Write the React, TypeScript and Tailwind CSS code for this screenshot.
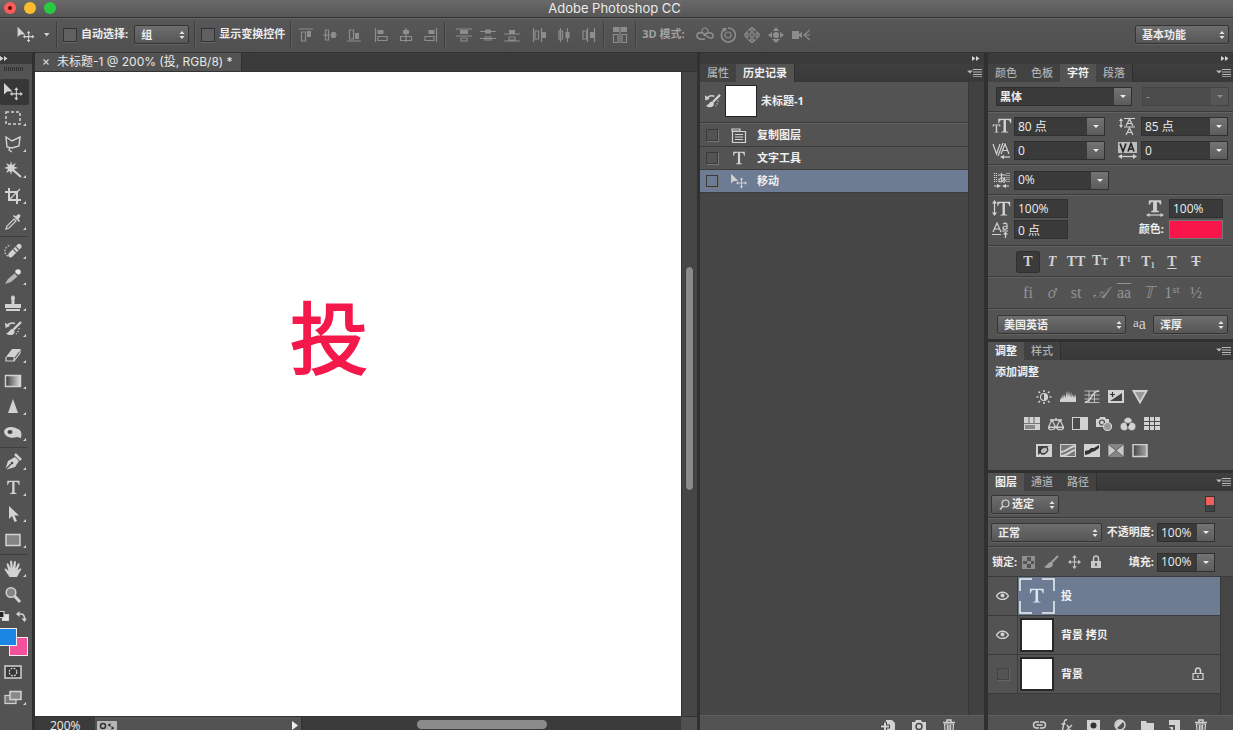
import { ChangeEvent, ReactNode, useState } from "react";

const LIGHT = "#d2d2d2";
const DIM = "#8d8d8d";

/* ---------- shared pieces ---------- */

interface SvgProps {
    w?: number;
    h?: number;
    box?: string;
    color?: string;
    children: ReactNode;
}

function Svg({ w = 18, h = 18, box, color = LIGHT, children }: SvgProps) {
    return (
        <svg
            width={w}
            height={h}
            viewBox={box ?? `0 0 ${w} ${h}`}
            fill="none"
            stroke={color}
            color={color}
            strokeWidth={1.2}
            className="block shrink-0"
            aria-hidden="true"
        >
            {children}
        </svg>
    );
}

function UpDown() {
    return (
        <svg width="6" height="8" viewBox="0 0 6 8" fill="#e4e4e4" className="pointer-events-none absolute top-[6px] right-1">
            <path d="M0.5 3 3 0l2.5 3zM0.5 5 3 8l2.5-3z" />
        </svg>
    );
}

interface PickerProps {
    label: string;
    options: string[];
    className: string;
    inset?: string;
    children?: ReactNode;
}

function Picker({ label, options, className, inset = "pl-[6px]", children }: PickerProps) {
    return (
        <div className={`relative h-[19px] shrink-0 ${className}`}>
            <select
                aria-label={label}
                className={`block h-full w-full appearance-none rounded-[2px] border border-[#353535] bg-linear-to-b from-[#6e6e6e] to-[#565656] pr-3 text-[11px] leading-4 font-bold text-[#ececec] shadow-[0_1px_0_#626262] outline-none ${inset}`}
            >
                {options.map((option) => (
                    <option key={option}>{option}</option>
                ))}
            </select>
            {children}
            <UpDown />
        </div>
    );
}

interface ComboProps {
    label: string;
    value: string;
    className: string;
    disabled?: boolean;
    cjk?: boolean;
}

function Combo({ label, value, className, disabled = false, cjk = false }: ComboProps) {
    return (
        <div className={`flex h-[19px] shrink-0 border ${disabled ? "border-[#444] bg-[#4c4c4c]" : "border-[#303030] bg-[#3a3a3a]"} ${className}`}>
            <input
                aria-label={label}
                defaultValue={value}
                disabled={disabled}
                className={`min-w-0 flex-1 bg-transparent pl-[3px] leading-4 outline-none ${cjk ? "text-[11px] font-bold" : "text-[12px]"} ${disabled ? "text-[#8d8d8d]" : "text-[#eeeeee]"}`}
            />
            <button
                aria-label={`${label} 选项`}
                disabled={disabled}
                className={`flex w-[17px] items-center justify-center ${disabled ? "bg-[#565656]" : "bg-linear-to-b from-[#747474] to-[#5c5c5c]"}`}
            >
                <svg width="6" height="3" viewBox="0 0 6 3" fill={disabled ? "#8d8d8d" : "#eee"}>
                    <path d="M0 0h6L3 3z" />
                </svg>
            </button>
        </div>
    );
}

function Field({ label, value }: { label: string; value: string }) {
    return (
        <input
            aria-label={label}
            defaultValue={value}
            className="h-[19px] w-[54px] shrink-0 border border-[#303030] bg-[#3a3a3a] pl-[3px] text-[12px] leading-4 text-[#eee] outline-none"
        />
    );
}

function PanelTop() {
    return (
        <div className="flex h-[11px] shrink-0 items-center justify-end bg-[#3b3b3b] pr-1">
            <DoubleArrow />
        </div>
    );
}

function DoubleArrow() {
    return (
        <svg width="8" height="5" viewBox="0 0 8 5" fill="#d6d6d6">
            <path d="M0 0l3.5 2.5L0 5zM4 0l3.5 2.5L4 5z" />
        </svg>
    );
}

function PanelTabs({ tabs, initial }: { tabs: string[]; initial: string }) {
    const [active, setActive] = useState(initial);
    return (
        <div className="flex h-[18px] shrink-0 items-center bg-linear-to-b from-[#3f3f3f] to-[#383838]">
            {tabs.map((tab) => (
                <button
                    key={tab}
                    onClick={() => setActive(tab)}
                    className={`-mr-px h-full border-r border-[#303030] px-[7px] text-[11px] leading-[18px] ${
                        active === tab ? "bg-[#535353] font-bold text-[#efefef]" : "bg-[#424242] font-medium text-[#b0b0b0]"
                    }`}
                >
                    {tab}
                </button>
            ))}
            <button aria-label="面板菜单" className="mr-[2px] ml-auto">
                <Svg w={15} h={8} color="#b8b8b8">
                    <path d="M0 1.5h6L3 4.5z" fill="currentColor" stroke="none" />
                    <path d="M6 .5h9M6 3h9M6 5.5h9M6 7.8h9" strokeWidth={1} />
                </Svg>
            </button>
        </div>
    );
}

function Rule() {
    return <div className="h-[2px] shrink-0 border-t border-b border-t-[#3b3b3b] border-b-[#636363]" />;
}

function Divider({ className = "" }: { className?: string }) {
    return <div className={`h-[26px] w-[2px] shrink-0 border-r border-l border-r-[#5e5e5e] border-l-[#3e3e3e] ${className}`} />;
}

const MoveArt = () => (
    <>
        <path d="M0 1v12l3.500-3H9z" fill="currentColor" stroke="none" />
        <path d="M13 7.500v10M8 12.500h10" />
        <path d="M13 5.600l2.200 2.800h-4.400zM13 19.400l2.200-2.800h-4.400zM6.100 12.500l2.800-2.200v4.400zM19.900 12.500l-2.800-2.200v4.400z" fill="currentColor" stroke="none" />
    </>
);

const HistoryBrushArt = () => (
    <>
        <path d="M17 2 9.500 9.500" strokeWidth={2.400} />
        <path d="M9 9c-3-.5-3 3-7 4.500 3 2.500 9 2.500 8.500-2.800z" fill="currentColor" stroke="none" />
        <path d="M3 6c2-3 5-3.500 8-2.500" strokeWidth={1.600} />
        <path d="M1 2.500 1.500 8l4.500-2z" fill="currentColor" stroke="none" />
        <path d="M15 8c0 2-1 4-3 6" strokeDasharray="1.500 1.500" />
    </>
);

const CameraArt = () => (
    <>
        <path d="M1 3h3l1-2h5l1 2h4v10H1z" fill="currentColor" stroke="none" />
        <circle cx="8" cy="7.500" r="3" stroke="#444" strokeWidth="1.500" />
    </>
);

const TrashArt = () => (
    <>
        <path d="M1 3.500h12M5 3V1h4v2" strokeWidth={1.500} />
        <path d="M2.500 5h9l-.6 8H3.100zM5.400 6v7M8.600 6v7" />
        <path d="M7 6v7" />
    </>
);

const LockArt = () => (
    <>
        <path d="M3.500 6V4a2.500 3 0 0 1 5 0v2" strokeWidth={1.500} />
        <path d="M1 6h10v7H1z" fill="currentColor" stroke="none" />
        <path d="M6 8v3" stroke="#444" strokeWidth={1.500} />
    </>
);

const SerifT = () => (
    <path
        d="M1.500 1h15v5h-1c-.4-2.600-1.200-3.600-3.500-3.600h-1.600V14c0 1.600.4 2 2.600 2.100v.9H5v-.9c2.200-.1 2.600-.5 2.600-2.100V2.400H6C3.700 2.400 2.900 3.400 2.500 6h-1z"
        fill="currentColor"
        stroke="none"
    />
);

/* ---------- options bar ---------- */

const alignIcons: ReactNode[][] = [
    [
        <path key="a" d="M1 1h14M3.500 4h4v9h-4z" />,
        <path key="b" d="M1 7h14M3.500 2h3v10h-3zM10 5h3v4h-3z" />,
        <path key="c" d="M1 13h14M3.500 2h4v9h-4z" />,
    ],
    [
        <path key="a" d="M1.500 0v14M4 8.500h9v4H4z" />,
        <path key="b" d="M8 0v14M2.500 8.500h11v4h-11z" />,
        <path key="c" d="M14.500 0v14M3 8.500h9v4H3z" />,
    ],
    [
        <path key="a" d="M0 1h16M0 8h16M5 10h6v3H5z" />,
        <path key="b" d="M0 3.500h16M0 10.500h16M5 9h6v3H5z" />,
        <path key="c" d="M0 6h16M0 13h16M5 9h6v3H5z" />,
    ],
    [
        <path key="a" d="M1.500 0v14M9.500 0v14M3 3h3.500v8H3z" />,
        <path key="b" d="M4.500 0v14M11.500 0v14M3 3h3.500v8H3z" fill="#535353" />,
        <path key="c" d="M7.500 0v14M14.500 0v14M3 3h3.500v8H3z" />,
    ],
];

const alignFills = [
    ["M9 3h4v6H9z", "M9.500 4h4v6h-4z", "M9 5h4v6H9z"],
    ["M3.500 2h6v4h-6z", "M5 2h6v4H5z", "M6.500 2h6v4h-6z"],
    ["M4 2h8v4H4z", "M5 1.500h6v4H5z", "M5 2h6v4H5z"],
    ["M10 4h4v6h-4z", "M9.500 4h4v6h-4z", "M10 4h4v6h-4z"],
];

const modeIcons: { name: string; art: ReactNode }[] = [
    {
        name: "3D 环绕",
        art: (
            <>
                <path d="M9 12C4 13 0 11 1 8s5-3 7-1 4 4 7 4 3-4 0-5-6 1-7 3" strokeWidth={1.600} />
                <circle cx="9" cy="4" r="3" />
            </>
        ),
    },
    {
        name: "3D 滚动",
        art: (
            <>
                <path d="M4 2.500A7 7 0 1 0 8 1" strokeWidth={1.600} />
                <circle cx="8" cy="8" r="3" />
                <path d="M2 1h5L5 5z" fill="currentColor" stroke="none" />
            </>
        ),
    },
    {
        name: "3D 平移",
        art: <path d="M7 9H3v2L.5 8 3 5v2h4V3H5l3-2.500L11 3H9v4h4V5l2.500 3-2.500 3V9H9v4h2l-3 2.500L5 13h2z" />,
    },
    {
        name: "3D 滑动",
        art: (
            <>
                <path d="M8 0l3 4H5zM8 16l4-4H4zM0 8l4-3v6zM16 8l-4-3v6z" fill="currentColor" stroke="none" />
                <circle cx="8" cy="8" r="2.500" fill="currentColor" />
            </>
        ),
    },
    {
        name: "3D 缩放",
        art: (
            <>
                <path d="M0 4h7v8H0zM7 7l3-2v6L7 9z" fill="currentColor" stroke="none" />
                <path d="M18 3l-6 5 6 5M12 8h6" />
            </>
        ),
    },
];

function CheckItem({ children }: { children: string }) {
    return (
        <label className="flex shrink-0 items-center gap-1 text-[11px] font-bold text-[#ececec]">
            <input
                type="checkbox"
                className="h-[14px] w-[14px] appearance-none border border-[#333] bg-[#606060] shadow-[0_1px_0_#666] checked:bg-[#9a9a9a]"
            />
            {children}
        </label>
    );
}

function AlignGroup({ index }: { index: number }) {
    return (
        <div className="flex shrink-0">
            {alignIcons[index].map((art, i) => (
                <button key={i} aria-label={`对齐 ${index * 3 + i + 1}`} className="flex w-6 justify-center">
                    <Svg w={16} h={14} color={DIM}>
                        {art}
                        <path d={alignFills[index][i]} fill="currentColor" stroke="none" />
                    </Svg>
                </button>
            ))}
        </div>
    );
}

function OptionsBar() {
    return (
        <div className="flex h-[35px] shrink-0 items-center border-t border-b border-t-[#666] border-b-[#333] bg-linear-to-b from-[#575757] to-[#505050] pb-[2px]">
            <div className="flex w-14 shrink-0 items-center gap-2 pl-[17px]">
                <Svg w={19} h={17} box="0 0 21 20">
                    <MoveArt />
                </Svg>
                <Svg w={6} h={4}>
                    <path d="M0 0h5.500L2.700 3.500z" fill="currentColor" stroke="none" />
                </Svg>
            </div>
            <Divider className="mr-[5px]" />
            <CheckItem>自动选择:</CheckItem>
            <Picker label="自动选择" options={["组", "图层"]} className="ml-[6px] w-[55px]" />
            <Divider className="mx-[5px]" />
            <CheckItem>显示变换控件</CheckItem>
            <Divider className="mr-[2px] ml-[5px]" />
            <div className="flex shrink-0 gap-1">
                <AlignGroup index={0} />
                <AlignGroup index={1} />
            </div>
            <Divider className="mr-[6px] ml-[2px]" />
            <div className="flex shrink-0 gap-1">
                <AlignGroup index={2} />
                <AlignGroup index={3} />
            </div>
            <Divider className="mr-[3px] ml-[3px]" />
            <button aria-label="自动对齐图层" className="flex w-6 shrink-0 justify-center">
                <Svg w={16} h={16} color={DIM}>
                    <path d="M1 0h6v5H1zM9 0h6v5H9z" fill="currentColor" stroke="none" />
                    <path d="M1.500 7.500h4.500v8H1.500zM10 7.500h4.500v8H10zM8 0v16" />
                </Svg>
            </button>
            <Divider className="mr-[5px] ml-[3px]" />
            <span className="shrink-0 text-[11px] font-bold text-[#a2a2a2]">3D 模式:</span>
            <div className="ml-2 flex shrink-0">
                {modeIcons.map(({ name, art }) => (
                    <button key={name} aria-label={name} className="flex w-6 justify-center">
                        <Svg w={18} h={16} color={DIM}>
                            {art}
                        </Svg>
                    </button>
                ))}
            </div>
            <Picker label="工作区" options={["基本功能", "绘画", "摄影"]} className="mr-1 ml-auto w-[94px]" />
        </div>
    );
}

/* ---------- tool strip ---------- */

const toolGroups: { name: string; art: ReactNode; single?: boolean }[][] = [
    [
        { name: "移动工具", art: <g transform="scale(.95) translate(0 -1)"><MoveArt /></g>, single: true },
        { name: "矩形选框工具", art: <rect x="2" y="3" width="14" height="12" strokeDasharray="3 2" strokeWidth={1.500} /> },
        { name: "多边形套索工具", art: <path d="M2 2l6 4 8-4-1 9-7 2-5-1zM6 12l-1 3 3 2" strokeWidth={1.400} /> },
        {
            name: "魔棒工具",
            art: (
                <>
                    <path d="M8 8l9 8" strokeWidth={2.200} />
                    <path d="M7 0l1 4 4-2-2 3.500 4 1.500-4 1 2 4-4-2-1 4-1-4-4 2 2-4-4-1 4-1.500L2 2l4 2z" fill="currentColor" stroke="none" />
                </>
            ),
        },
        { name: "裁剪工具", art: <><path d="M5 1v12h12M1 5h12v12" strokeWidth={2} /><path d="M16 2 6 12" /></> },
        {
            name: "吸管工具",
            art: (
                <>
                    <path d="M2 16l1-3 7-7 2 2-7 7z" />
                    <path d="M9 3l6 6 1-1-1.500-2C18 3 16 0 13 2l-1 1.500L10 2z" fill="currentColor" stroke="none" />
                </>
            ),
        },
    ],
    [
        {
            name: "污点修复画笔工具",
            art: (
                <>
                    <path d="M5 11 14 2c2-1 5 2 3 4l-9 9c-3 2-5-2-3-4z" fill="currentColor" stroke="none" />
                    <path d="M9 7l4 4M11.500 4.500l4 4" stroke="#666" />
                    <path d="M4 14C-1 12 0 4 7 3" strokeDasharray="1.500 1.500" />
                </>
            ),
        },
        {
            name: "画笔工具",
            art: (
                <>
                    <path d="M1 16 4 11l7-6 3 3-7 6z" fill="#b5b5b5" stroke="none" />
                    <circle cx="14" cy="4" r="2.800" fill="#e4e4e4" stroke="none" />
                    <path d="M11 5l3 3" stroke="#555" />
                </>
            ),
        },
        {
            name: "仿制图章工具",
            art: <path d="M7.500 10V6c-2.500-6 5.500-6 3 0v4H17v4H1v-4zM2 15h14v2H2z" fill="currentColor" stroke="none" />,
        },
        { name: "历史记录画笔工具", art: <HistoryBrushArt /> },
        {
            name: "橡皮擦工具",
            art: (
                <>
                    <path d="M2 11 8 3h9l-6 8z" fill="currentColor" stroke="none" />
                    <path d="M2 11v4h8v-4M10 15l6-8V4" />
                </>
            ),
        },
        {
            name: "渐变工具",
            art: (
                <>
                    <defs>
                        <linearGradient id="toolGradient">
                            <stop offset="0" stopColor="#3a3a3a" />
                            <stop offset="1" stopColor="#e0e0e0" />
                        </linearGradient>
                    </defs>
                    <rect x="1.500" y="3.500" width="15" height="11" fill="url(#toolGradient)" strokeWidth={1.500} />
                </>
            ),
        },
        { name: "锐化工具", art: <path d="M9 1l5 14H4z" fill="currentColor" stroke="none" /> },
        {
            name: "海绵工具",
            art: (
                <>
                    <path d="M0 7c2-5 9-5 14-2 3 1 4 4 3 9l-4-1c-6 2-13 0-13-6z" fill="currentColor" stroke="none" />
                    <ellipse cx="6" cy="8" rx="2.500" ry="2" fill="#444" stroke="none" />
                </>
            ),
        },
    ],
    [
        {
            name: "钢笔工具",
            art: (
                <>
                    <path d="M1 17 4 8l7-4 4 4-4 6z" fill="currentColor" stroke="none" />
                    <path d="M1 17l6-6" stroke="#444" />
                    <circle cx="8" cy="10" r="1.300" fill="#444" stroke="none" />
                    <path d="M11 1l6 6" strokeWidth={2.500} />
                </>
            ),
        },
        { name: "文字工具", art: <g transform="translate(2 1) scale(.82)"><SerifT /></g> },
        { name: "路径选择工具", art: <path d="M5 1v13l3-3 2.500 6 2.500-1-2.500-5.500H15z" fill="currentColor" stroke="none" /> },
        { name: "矩形工具", art: <rect x="2" y="3.500" width="14" height="11" fill="#858585" strokeWidth={1.500} /> },
    ],
    [
        {
            name: "抓手工具",
            art: (
                <path
                    d="M5.500 17C4 14 1 11 .5 9c1-1 2 0 4 2L2.500 4c1-1.500 2-.5 2.300.5L6.500 8 6 1.500C7 0 8 .5 8.200 2l.6 6 1.200-6.500c1-1 2-.5 1.900 1L11.500 8.500l2.500-5c1.500-.8 2 .3 1.500 1.500l-2 5.500 2.500-2c1.500-.3 1.500.6 1 1.500C15 13 14 15 13 17z"
                    fill="currentColor"
                    stroke="none"
                />
            ),
        },
        {
            name: "缩放工具",
            art: (
                <>
                    <circle cx="7" cy="6.500" r="4.800" fill="#858585" strokeWidth={1.500} />
                    <path d="M10.500 10l5.500 6" strokeWidth={3} />
                </>
            ),
            single: true,
        },
    ],
];

function ToolStrip() {
    const [tool, setTool] = useState("移动工具");
    return (
        <nav aria-label="工具" className="flex w-8 shrink-0 flex-col bg-[#535353]">
            <div className="flex h-[11px] shrink-0 items-center bg-[#3b3b3b]">
                <DoubleArrow />
            </div>
            <div className="mt-[3px] mb-[8px] ml-1 h-1 w-5 shrink-0 bg-[repeating-linear-gradient(90deg,#303030_0_1px,#535353_1px_2px)]" />
            {toolGroups.map((group, i) => (
                <div key={i} className="shrink-0">
                    {i > 0 && (
                        <div className="mr-1 py-px">
                            <div className="h-px bg-[#3f3f3f]" />
                        </div>
                    )}
                    {group.map(({ name, art, single }) => (
                        <button
                            key={name}
                            aria-label={name}
                            title={name}
                            onClick={() => setTool(name)}
                            className={`block h-[26px] w-[29px] ${tool === name ? "rounded-[2px] bg-[#373737]" : ""}`}
                        >
                            <Svg w={29} h={26}>
                                <g transform="translate(4 4)">{art}</g>
                                {!single && <path d="M26 18v3h-3z" fill="currentColor" stroke="none" />}
                            </Svg>
                        </button>
                    ))}
                </div>
            ))}
            <div className="flex h-4 shrink-0 items-center justify-between pr-[5px]">
                <Svg w={10} h={10}>
                    <path d="M2.500 3.500h6v6h-6z" fill="#e5e5e5" />
                    <path d="M-2 .5h6v6h-6z" fill="#222" />
                </Svg>
                <Svg w={11} h={11}>
                    <path d="M3 3h2c3 0 3.500 2 3.500 5" strokeWidth={1.500} />
                    <path d="M0 3l3.500-3v6zM5.500 7.500h5.500L8.500 11z" fill="currentColor" stroke="none" />
                </Svg>
            </div>
            <div className="relative mt-1 h-7 shrink-0">
                <button aria-label="背景色" className="absolute top-[9px] left-[9px] h-[19px] w-[19px] border border-[#eee] bg-[#f4509c]" />
                <button aria-label="前景色" className="absolute top-0 -left-px h-[18px] w-[18px] border border-[#eee] bg-[#1c86e4]" />
            </div>
            <button aria-label="快速蒙版" className="mt-2 ml-1 h-4 shrink-0">
                <Svg w={18} h={14}>
                    <rect x="1" y="1" width="16" height="12" fill="#383838" strokeWidth={1.500} />
                    <circle cx="9" cy="7" r="3.800" strokeDasharray="2 1" />
                </Svg>
            </button>
            <button aria-label="屏幕模式" className="mt-[10px] ml-1 h-4 shrink-0">
                <Svg w={22} h={16}>
                    <rect x="1" y="5.500" width="11" height="8" fill="#777" />
                    <rect x="6" y="1.500" width="11" height="8" fill="#888" strokeWidth={1.500} />
                    <path d="M22 12v3h-3z" fill="currentColor" stroke="none" />
                </Svg>
            </button>
        </nav>
    );
}

/* ---------- document ---------- */

function DocumentArea() {
    return (
        <main className="flex min-w-0 flex-1 flex-col border-l-3 border-[#303030] bg-[#3b3b3b]">
            <div className="flex h-[19px] shrink-0 border-b border-[#333]">
                <div className="flex items-center gap-2 border-r border-[#303030] bg-[#535353] pr-2 pl-2 font-['Inter','Noto_Sans_CJK_SC',sans-serif] text-[12px] whitespace-nowrap text-[#e8e8e8]">
                    <button aria-label="关闭文档">
                        <Svg w={6} h={6}>
                            <path d="M.5.5l5 5M5.500.5l-5 5" />
                        </Svg>
                    </button>
                    未标题-1 @ 200% (投, RGB/8) *
                </div>
            </div>
            <div className="flex min-h-0 flex-1">
                <div className="relative min-w-0 flex-1 bg-white">
                    <span className="absolute top-[220px] left-[255px] font-['Noto_Sans_CJK_SC',sans-serif] text-[78px] leading-[84px] text-[#f5184a] [-webkit-text-stroke:2px_#f5184a]">
                        投
                    </span>
                </div>
                <div className="flex w-4 shrink-0 justify-center border-l border-[#333] bg-[#464646] pt-[194px]">
                    <div className="h-[225px] w-[9px] rounded-full border border-[#3a3a3a] bg-[#8b8b8b]" />
                </div>
            </div>
            <div className="flex h-[14px] shrink-0 overflow-hidden border-t border-[#333]">
                <input aria-label="缩放比例" defaultValue="200%" className="h-[17px] w-[60px] bg-transparent pl-[15px] text-[12px] leading-[17px] text-[#eee] outline-none" />
                <div className="flex w-[207px] items-start justify-between border-r border-[#333] bg-[#535353] pt-[3px] pr-[2px]">
                    <Svg w={22} h={12}>
                        <rect x="2" y="1" width="20" height="12" rx="1" fill="#b5b5b5" stroke="none" />
                        <circle cx="8" cy="6" r="2.500" stroke="#333" strokeWidth={1.500} />
                        <path d="M12.500 5l3-2v4zM19.500 8l-3-2v4z" fill="#333" stroke="none" />
                    </Svg>
                    <Svg w={7} h={10} color="#eee">
                        <path d="M0 1l6 4.500L0 10z" fill="currentColor" stroke="none" />
                    </Svg>
                </div>
                <div className="flex-1 pt-[3px] pl-[115px]">
                    <div className="h-[9px] w-[130px] rounded-full bg-[#8b8b8b]" />
                </div>
                <div className="w-4 bg-[#505050]" />
            </div>
        </main>
    );
}

/* ---------- history panel ---------- */

const history = [
    {
        name: "复制图层",
        icon: (
            <Svg w={16} h={15}>
                <path d="M1.500 3.500h13v11h-13zM1 1h8v2H1z" />
                <path d="M4 6.500h8M4 9h8M4 11.500h8" />
            </Svg>
        ),
    },
    {
        name: "文字工具",
        icon: (
            <Svg w={14} h={14} box="0 0 18 18">
                <SerifT />
            </Svg>
        ),
    },
    {
        name: "移动",
        icon: (
            <Svg w={19} h={16} box="0 0 21 20">
                <MoveArt />
            </Svg>
        ),
    },
];

function HistoryPanel() {
    const [current, setCurrent] = useState("移动");
    return (
        <aside className="flex w-[291px] shrink-0 flex-col border-r-4 border-l-3 border-[#303030] bg-[#535353]">
            <PanelTop />
            <PanelTabs tabs={["属性", "历史记录"]} initial="历史记录" />
            <div className="flex min-h-0 flex-1">
                <div className="flex flex-1 flex-col bg-[#464646]">
                    <div className="flex h-10 shrink-0 items-center gap-1 bg-[#535353] pb-[2px] pl-1">
                        <Svg w={17} h={16} box="0 0 18 17">
                            <HistoryBrushArt />
                        </Svg>
                        <div className="h-8 w-8 border border-[#222] bg-white" />
                        <span className="text-[11px] font-bold text-[#efefef]">未标题-1</span>
                    </div>
                    <Rule />
                    {history.map(({ name, icon }) => (
                        <div
                            key={name}
                            className={`flex h-[23px] shrink-0 items-center border-b border-[#3c3c3c] pl-[6px] ${current === name ? "bg-[#6d7b93]" : "bg-[#535353]"}`}
                        >
                            <input
                                type="checkbox"
                                aria-label={`历史画笔源 ${name}`}
                                className="h-3 w-3 appearance-none border border-[#3a3a3a] shadow-[1px_1px_0_#777]"
                            />
                            <button onClick={() => setCurrent(name)} className="flex flex-1 items-center">
                                <span className="flex w-[39px] justify-center pl-[3px]">{icon}</span>
                                <span className="text-[11px] font-bold text-[#efefef]">{name}</span>
                            </button>
                        </div>
                    ))}
                </div>
                <div className="w-4 shrink-0 border-l border-[#383838] bg-[#414141]" />
            </div>
            <div className="flex h-[15px] shrink-0 items-start justify-end gap-[15px] overflow-hidden border-t border-[#606060] pt-[3px] pr-[29px]">
                <button aria-label="从当前状态创建新文档">
                    <Svg w={16} h={14}>
                        <path d="M6 1h6l3 3v9H6z" fill="currentColor" stroke="none" />
                        <path d="M0 7.500h10M5 3v9" stroke="#444" strokeWidth={4} />
                        <path d="M1 7.500h8M5 3.500v8" strokeWidth={2} />
                    </Svg>
                </button>
                <button aria-label="创建新快照">
                    <Svg w={16} h={14}>
                        <CameraArt />
                    </Svg>
                </button>
                <button aria-label="删除当前状态">
                    <Svg w={13} h={14}>
                        <TrashArt />
                    </Svg>
                </button>
            </div>
        </aside>
    );
}

/* ---------- character panel ---------- */

const serif = "font-['Liberation_Serif',serif]";

const styleButtons: { name: string; face: ReactNode; on?: boolean }[] = [
    { name: "仿粗体", face: "T", on: true },
    { name: "仿斜体", face: <i>T</i> },
    { name: "全部大写字母", face: "TT" },
    { name: "小型大写字母", face: <>T<small className="text-[10px]">T</small></> },
    { name: "上标", face: <>T<sup className="text-[8px]">1</sup></> },
    { name: "下标", face: <>T<sub className="text-[8px]">1</sub></> },
    { name: "下划线", face: <u className="underline-offset-2">T</u> },
    { name: "删除线", face: <s>T</s> },
];

const openTypeButtons: { name: string; face: ReactNode }[] = [
    { name: "标准连字", face: "fi" },
    { name: "上下文替代字", face: <i>ơ</i> },
    { name: "自由连字", face: "st" },
    { name: "花饰字", face: <i>𝒜</i> },
    { name: "文体替代字", face: <span className="overline">aa</span> },
    { name: "标题替代字", face: <i>𝕋</i> },
    { name: "序数字", face: <>1<sup className="text-[11px]">st</sup></> },
    { name: "分数字", face: "½" },
];

function CharacterPanel() {
    return (
        <section className="shrink-0">
            <PanelTabs tabs={["颜色", "色板", "字符", "段落"]} initial="字符" />
            <div className="flex h-[29px] items-center gap-[10px] pl-2">
                <Combo label="字体" value="黑体" className="w-[136px]" cjk />
                <Combo label="字体样式" value="-" className="w-[87px]" disabled />
            </div>
            <Rule />
            <div className="grid grid-cols-[26px_91px_36px_87px] gap-y-[5px] pt-1 pb-1">
                <div className="flex items-center pl-1">
                    <Svg w={20} h={17}>
                        <g transform="translate(5 0) scale(.86)"><SerifT /></g>
                        <g transform="translate(0 6) scale(.5)"><SerifT /></g>
                    </Svg>
                </div>
                <Combo label="字体大小" value="80 点" className="w-full" />
                <div className="flex items-center justify-center pl-2">
                    <Svg w={18} h={17}>
                        <path d="M6 .5h11M6 9h11M3 2v6" />
                        <path d="M3 0l2 3H1zM3 10l2-3H1z" fill="currentColor" stroke="none" />
                        <path d="M8 8l3.500-7L15 8M9 5.500h5M8 17l3.500-7L15 17M9 14.500h5" />
                    </Svg>
                </div>
                <Combo label="行距" value="85 点" className="w-full" />
                <div className="flex items-center pl-1">
                    <Svg w={20} h={16}>
                        <path d="M1 1l3.500 10L8 1M6 13l5-13M9 11l4-10 4 10M10.500 7.500h5" />
                        <path d="M10 14h8" />
                        <path d="M8 14l4-2v4z" fill="currentColor" stroke="none" />
                    </Svg>
                </div>
                <Combo label="字距微调" value="0" className="w-full" />
                <div className="flex items-center justify-center pl-2">
                    <Svg w={19} h={17}>
                        <path d="M0 0h19v11H0z" fill="#bdbdbd" stroke="none" />
                        <path d="M2 1.500l3 8 3-8M10 9.500l3-8 3 8M11 7h4" stroke="#222" strokeWidth={1.600} />
                        <path d="M2 14.500h15" />
                        <path d="M0 14.500l4-2.500v5zM19 14.500l-4-2.500v5z" fill="currentColor" stroke="none" />
                    </Svg>
                </div>
                <Combo label="字符间距" value="0" className="w-full" />
            </div>
            <Rule />
            <div className="flex h-[28px] items-center pl-1">
                <Svg w={22} h={17}>
                    <path d="M2.500 1v9M17 1v9M4.500 1v9M15 1v9" strokeDasharray="1 1" />
                    <path d="M6 3h8M9.500 1v9M13 5c-1 3-3 5-5 5-3-1 0-5 3-4s3 4 0 4.500" />
                    <path d="M2 14h4M13 14h4" />
                    <path d="M9 14l-4-2v4zM10 14l4-2v4z" fill="currentColor" stroke="none" />
                </Svg>
                <Combo label="比例间距" value="0%" className="w-[95px]" />
            </div>
            <Rule />
            <div className="flex flex-col gap-[2px] pt-[3px] pr-[10px] pb-[6px]">
                <div className="flex h-[19px] items-center pl-1">
                    <Svg w={22} h={17}>
                        <g transform="translate(4 1) scale(.86)"><SerifT /></g>
                        <path d="M2.500 2v12" />
                        <path d="M2.500 0l2.500 3.500H0zM2.500 16L5 12.500H0z" fill="currentColor" stroke="none" />
                    </Svg>
                    <Field label="垂直缩放" value="100%" />
                    <div className="mr-[5px] ml-auto">
                        <Svg w={18} h={17}>
                            <g transform="translate(2 0) scale(.78 .7)" stroke="currentColor" strokeWidth={1}>
                                <path d="M1.500 1h15v5h-1c-.4-2.600-1.200-3.600-3.500-3.600h-1V14c0 1.600.4 2 2.600 2.100v.9H4.500v-.9c2.200-.1 2.600-.5 2.600-2.100V2.400H6C3.700 2.400 2.900 3.400 2.500 6h-1z" fill="currentColor" />
                            </g>
                            <path d="M2 15h14" />
                            <path d="M0 15l3.500-2v4zM18 15l-3.500-2v4z" fill="currentColor" stroke="none" />
                        </Svg>
                    </div>
                    <Field label="水平缩放" value="100%" />
                </div>
                <div className="flex h-[19px] items-center pl-1">
                    <Svg w={22} h={16}>
                        <path d="M1 10l4-9 4 9M2.500 7h5M0 12.500h9" />
                        <path d="M11 2c2-1.500 4-1 4 1v4M15 4c-5 0-5 3.500-2 3.500l2-1M10 9h6M13.500 11v5" />
                        <path d="M13.500 9.500l2.500 3h-5z" fill="currentColor" stroke="none" />
                    </Svg>
                    <Field label="基线偏移" value="0 点" />
                    <span className="mr-[5px] ml-auto text-[11px] font-bold text-[#ececec]">颜色:</span>
                    <button aria-label="文本颜色" className="h-[19px] w-[54px] border border-[#777] bg-[#f9144a]" />
                </div>
            </div>
            <Rule />
            <div className={`flex h-[29px] items-center pl-7 ${serif} text-[14px] font-bold text-[#d2d2d2]`}>
                {styleButtons.map(({ name, face, on }) => (
                    <button key={name} aria-label={name} className={`h-[22px] w-6 leading-5 whitespace-nowrap ${on ? "rounded-[2px] border border-[#303030] bg-[#3a3a3a]" : ""}`}>
                        {face}
                    </button>
                ))}
            </div>
            <Rule />
            <div className={`flex h-[30px] items-center pl-7 ${serif} text-[16px] text-[#939393]`}>
                {openTypeButtons.map(({ name, face }) => (
                    <button key={name} aria-label={name} className="h-[22px] w-6 leading-5 whitespace-nowrap">
                        {face}
                    </button>
                ))}
            </div>
            <Rule />
            <div className="flex h-[29px] items-center pl-[9px]">
                <Picker label="语言" options={["美国英语", "英国英语"]} className="w-[129px]" />
                <span className={`flex w-[27px] justify-center ${serif} leading-4 text-[#d2d2d2]`}>
                    <span className="pb-1 text-[13px]">a</span>
                    <span className="pt-px text-[16px]">a</span>
                </span>
                <Picker label="消除锯齿" options={["浑厚", "锐利", "平滑"]} className="w-[75px]" />
            </div>
        </section>
    );
}

/* ---------- adjustments ---------- */

const frame = <path d="M.5.5h15v12H.5z" />;

const adjustments: { indent: string; icons: ReactNode[] }[] = [
    {
        indent: "pl-[44px]",
        icons: [
            <>
                <circle cx="8" cy="7" r="3.500" />
                <path d="M8 3.500a3.500 3.500 0 0 1 0 7z" fill="currentColor" stroke="none" />
                <path d="M8 0v2M8 12v2M.5 7h2M13.500 7h2M2.500 1.500l1.500 1.500M12 11l1.500 1.500M13.500 1.500 12 3M4 11l-1.500 1.500" strokeWidth={1.600} />
            </>,
            <path d="M0 12V8l1 2V6l1 3 1-5 1 5V4l1.500 4L7 1l1 6 1-6 1 6 1.500-5v6L13 4v4l1-3v3l1-4 1 4v4z" fill="currentColor" stroke="none" />,
            <>
                <path d="M.5 1h15M.5 5h15M.5 9h15M.5 12.500h15M5 1v12M10.500 1v12" strokeWidth={0.800} />
                <path d="M1 12c7 0 6-11 14-11" strokeWidth={1.500} />
            </>,
            <>
                <path d="M0 0h16v13H0z" fill="currentColor" stroke="none" />
                <path d="M2 11 14 3v8z" fill="#444" stroke="none" />
                <path d="M2 4.500h5M4.500 2v5" stroke="#333" />
            </>,
            <path d="M1.500 1h13L8 12.500z" fill="#999" strokeWidth={1.800} />,
        ],
    },
    {
        indent: "pl-[32px]",
        icons: [
            <>
                <path d="M0 0h16v13H0z" fill="currentColor" stroke="none" />
                <path d="M0 6.500h16M5 0v6M10 0v6" stroke="#777" />
                <path d="M1 8h10v4H1z" fill="#8a8a8a" stroke="none" />
            </>,
            <>
                <path d="M2 3h12M8 1v2" strokeWidth={1.600} />
                <path d="M4 3l-3.500 7h7zM12 3l-3.500 7h7zM0 10.500c1 3 6 3 7.500 0zM8.500 10.500c1 3 6 3 7.500 0z" />
            </>,
            <>
                {frame}
                <path d="M1 1h7v11H1z" fill="#4a4a4a" stroke="none" />
                <path d="M8 1h7v11H8z" fill="currentColor" stroke="none" />
            </>,
            <>
                <path d="M0 2h3l1-2h5l1 2h3v8H0z" fill="currentColor" stroke="none" />
                <circle cx="6" cy="5.500" r="2.500" stroke="#444" />
                <circle cx="11.500" cy="9.500" r="4" fill="#999" />
            </>,
            <>
                <circle cx="8" cy="4.500" r="4.200" fill="currentColor" stroke="#555" strokeWidth={0.800} />
                <circle cx="4.300" cy="9.500" r="4.200" fill="currentColor" stroke="#555" strokeWidth={0.800} />
                <circle cx="11.700" cy="9.500" r="4.200" fill="currentColor" stroke="#555" strokeWidth={0.800} />
                <path d="M6 6.500h4L8 10z" fill="#333" stroke="none" />
            </>,
            <>
                <path d="M0 0h16v13H0z" fill="currentColor" stroke="none" />
                <path d="M0 4.500h16M0 8.500h16M5.500 0v13M10.500 0v13" stroke="#4a4a4a" strokeWidth={1} />
            </>,
        ],
    },
    {
        indent: "pl-[44px]",
        icons: [
            <>
                <path d="M0 0h16v13H0z" fill="currentColor" stroke="none" />
                <path d="M2 2h11L2 11z" fill="#444" stroke="none" />
                <ellipse cx="8" cy="6.500" rx="4" ry="3" fill="#bbb" stroke="#333" transform="rotate(-35 8 6.500)" />
            </>,
            <>
                <path d="M.5.5h15v12H.5z" fill="#777" />
                <path d="M1 8C6 8 9 3 15 2M1 12c6 0 9-5 14-6" strokeWidth={2} />
            </>,
            <>
                <path d="M0 0h16v13H0z" fill="currentColor" stroke="none" />
                <path d="M1 7l4-1 2-2 3 0 5-3v3l-4 3-3 1-3 2-4 1z" fill="#333" stroke="none" />
            </>,
            <>
                <path d="M0 0h16v13H0z" fill="#858585" stroke="none" />
                <path d="M0 0l8 6.500L0 13zM16 0 8 6.500l8 6.500z" fill="#c8c8c8" stroke="#555" strokeWidth={0.800} />
            </>,
            <>
                <defs>
                    <linearGradient id="mapGradient">
                        <stop offset="0" stopColor="#444" />
                        <stop offset="1" stopColor="#aaa" />
                    </linearGradient>
                </defs>
                <rect x="1" y=".5" width="14" height="12" fill="url(#mapGradient)" strokeWidth={1.500} />
            </>,
        ],
    },
];

function AdjustmentsPanel() {
    return (
        <section className="shrink-0 border-t-3 border-[#303030]">
            <PanelTabs tabs={["调整", "样式"]} initial="调整" />
            <h2 className="h-[23px] pl-[7px] text-[11px] leading-[23px] font-bold text-[#efefef]">添加调整</h2>
            <div className="pb-[6px]">
                {adjustments.map(({ indent, icons }, row) => (
                    <div key={row} className={`flex h-[27px] items-center ${indent}`}>
                        {icons.map((art, i) => (
                            <button key={i} aria-label={`调整 ${row + 1}-${i + 1}`} className="flex w-6 justify-center">
                                <Svg w={16} h={14}>
                                    {art}
                                </Svg>
                            </button>
                        ))}
                    </div>
                ))}
            </div>
        </section>
    );
}

/* ---------- layers ---------- */

interface Layer {
    name: string;
    visible: boolean;
    text?: boolean;
    locked?: boolean;
}

const initialLayers: Layer[] = [
    { name: "投", visible: true, text: true },
    { name: "背景 拷贝", visible: true },
    { name: "背景", visible: false, locked: true },
];

const layerActions: { name: string; art: ReactNode }[] = [
    { name: "链接图层", art: <path d="M7 3H4.500a3 3 0 0 0 0 6H7M8 3h2.500a3 3 0 0 1 0 6H8M4.500 6h6" strokeWidth={1.400} /> },
    { name: "图层样式", art: <path d="M8 1C6 0 5.500 2 5 4L3.500 11C3 13 2 13 1 12.500M2.500 5h4M8 6l4 6M13 6l-6 6M14 13h1" strokeWidth={1.400} /> },
    {
        name: "添加蒙版",
        art: (
            <>
                <path d="M1 1h13v11H1z" fill="currentColor" stroke="none" />
                <circle cx="7.500" cy="6.500" r="3" fill="#333" stroke="none" />
            </>
        ),
    },
    {
        name: "调整图层",
        art: (
            <>
                <circle cx="7" cy="6" r="5" strokeWidth={1.500} />
                <path d="M3.500 9.500 10.500 2.500A5 5 0 0 0 3.500 9.500z" fill="currentColor" stroke="none" />
                <path d="M14 12h1" />
            </>
        ),
    },
    { name: "新建组", art: <path d="M1 2h5l1 2h7v8H1z" fill="currentColor" stroke="none" /> },
    {
        name: "新建图层",
        art: (
            <>
                <path d="M2 1h11v11H8V6H2z" fill="currentColor" stroke="none" />
                <path d="M2 8h4v4z" fill="currentColor" stroke="none" />
            </>
        ),
    },
    { name: "删除图层", art: <TrashArt /> },
];

function LayersPanel() {
    const [layers, setLayers] = useState(initialLayers);

    const toggle = (name: string) => (e: ChangeEvent<HTMLInputElement>) => {
        const visible = e.target.checked;
        setLayers((old) => old.map((layer) => (layer.name === name ? { ...layer, visible } : layer)));
    };

    return (
        <section className="flex min-h-0 flex-1 flex-col border-t-3 border-[#303030]">
            <PanelTabs tabs={["图层", "通道", "路径"]} initial="图层" />
            <div className="flex h-[26px] shrink-0 items-center justify-between pr-[18px] pl-[3px]">
                <Picker label="滤镜类型" options={["选定", "名称"]} className="w-[68px]" inset="pl-[20px]">
                    <span className="pointer-events-none absolute top-1 left-2">
                        <Svg w={11} h={11}>
                            <circle cx="6.500" cy="4.500" r="3.500" />
                            <path d="M4 7 1 10.500" strokeWidth={1.600} />
                        </Svg>
                    </span>
                </Picker>
                <button aria-label="图层过滤开关" className="flex h-4 w-[10px] flex-col border border-[#333] bg-[#3c4444]">
                    <span className="block h-2 w-full bg-[#f0605c]" />
                </button>
            </div>
            <Rule />
            <div className="flex h-[27px] shrink-0 items-center pr-[18px] pl-[3px]">
                <Picker label="混合模式" options={["正常", "溶解", "正片叠底"]} className="w-[111px]" />
                <span className="ml-auto pr-[3px] text-[11px] font-bold text-[#ececec]">不透明度:</span>
                <Combo label="不透明度" value="100%" className="w-[58px]" />
            </div>
            <Rule />
            <div className="flex h-[28px] shrink-0 items-center pr-[18px] pl-1">
                <span className="text-[11px] font-bold text-[#ececec]">锁定:</span>
                <div className="ml-[5px] flex items-center gap-[9px]">
                    <button aria-label="锁定透明像素">
                        <Svg w={13} h={13} color="#8f8f8f">
                            <path d="M1 1h4v4H1zM9 1h3v4H9zM5 5h4v3H5zM1 8h4v4H1zM9 8h3v4H9z" fill="currentColor" stroke="none" />
                            <path d="M.5.5h12v12H.5z" />
                        </Svg>
                    </button>
                    <button aria-label="锁定图像像素">
                        <Svg w={15} h={14} color="#a0a0a0">
                            <path d="M14 1 7 8" strokeWidth={2} />
                            <path d="M7 7c-3 0-3 3-7 5 3 2 9 1 9-3z" fill="currentColor" stroke="none" />
                        </Svg>
                    </button>
                    <button aria-label="锁定位置">
                        <Svg w={13} h={14} box="6 5 14 15" color="#c8c8c8">
                            <path d="M13 7v11M8 12.500h10" />
                            <path d="M13 5l2.500 3h-5zM13 20l2.500-3h-5zM6 12.500l3-2.500v5zM20 12.500 17 10v5z" fill="currentColor" stroke="none" />
                        </Svg>
                    </button>
                    <button aria-label="锁定全部">
                        <Svg w={12} h={14} color="#c8c8c8">
                            <LockArt />
                        </Svg>
                    </button>
                </div>
                <span className="ml-auto pr-[3px] text-[11px] font-bold text-[#ececec]">填充:</span>
                <Combo label="填充" value="100%" className="w-[58px]" />
            </div>
            <div className="flex min-h-0 flex-1 border-t border-[#3b3b3b]">
                <ul className="min-w-0 flex-1 bg-[#464646]">
                    {layers.map(({ name, visible, text, locked }) => (
                        <li key={name} className="flex h-[39px] items-center border-b border-[#3b3b3b] bg-[#535353]">
                            <label className="flex h-full w-[30px] shrink-0 items-center justify-center border-r border-[#3b3b3b]">
                                <input type="checkbox" aria-label={`显示 ${name}`} checked={visible} onChange={toggle(name)} className="sr-only" />
                                {visible ? (
                                    <Svg w={13} h={10}>
                                        <path d="M.5 5c3-5 9-5 12 0-3 4.500-9 4.500-12 0z" strokeWidth={1.300} />
                                        <circle cx="6.500" cy="4.500" r="2" fill="currentColor" stroke="none" />
                                    </Svg>
                                ) : (
                                    <span className="h-3 w-3 border border-[#434343] shadow-[1px_1px_0_#666]" />
                                )}
                            </label>
                            <div className={`flex h-full flex-1 items-center ${text ? "bg-[#6d7b93]" : ""}`}>
                                {text ? (
                                    <Svg w={38} h={38} color="#eef2f6">
                                        <path d="M2 14V2h12M24 2h12v12M36 24v12H24M14 36H2V24" strokeWidth={1.500} />
                                        <g transform="translate(10.500 11) scale(.92 .86)" color="#d8e6f2">
                                            <SerifT />
                                        </g>
                                    </Svg>
                                ) : (
                                    <div className="mx-[2px] h-[34px] w-[34px] border-2 border-[#282828] bg-white" />
                                )}
                                <button className="flex-1 pl-[5px] text-left text-[11px] font-bold text-[#f2f2f2]">{name}</button>
                                {locked && (
                                    <div className="pr-4">
                                        <Svg w={12} h={14}>
                                            <path d="M3.500 6V4a2.500 3 0 0 1 5 0v2" strokeWidth={1.500} />
                                            <path d="M1 6.500h10v6H1zM6 8v3" />
                                        </Svg>
                                    </div>
                                )}
                            </div>
                        </li>
                    ))}
                </ul>
                <div className="w-[13px] shrink-0 border-l border-[#383838] bg-[#454545]" />
            </div>
            <div className="flex h-[15px] shrink-0 overflow-hidden border-t border-[#606060] pt-[3px] pl-[39px]">
                {layerActions.map(({ name, art }) => (
                    <button key={name} aria-label={name} className="h-[14px] w-[27px] pl-[5px]">
                        <Svg w={15} h={14}>{art}</Svg>
                    </button>
                ))}
            </div>
        </section>
    );
}

export default function App() {
    return (
        <div className="flex h-screen flex-col overflow-hidden bg-[#303030] font-['Open_Sans','Noto_Sans_CJK_SC',sans-serif]">
            <header className="relative flex h-[18px] shrink-0 items-center justify-center border-b border-[#333] bg-linear-to-b from-[#6a6a6a] to-[#565656] pr-1 pb-[2px]">
                <div className="absolute top-[2px] left-1 flex gap-2">
                    <button aria-label="关闭" className="flex h-3 w-3 items-center justify-center rounded-full bg-[#fc5b57]">
                        <span className="h-1 w-1 rounded-full bg-[#5e0b08]" />
                    </button>
                    <button aria-label="最小化" className="h-3 w-3 rounded-full bg-[#fdbb2e]" />
                    <button aria-label="全屏" className="h-3 w-3 rounded-full bg-[#28ca42]" />
                </div>
                <h1 className="font-['Inter','Roboto',sans-serif] text-[13px] leading-4 text-[#eaeaea]">Adobe Photoshop CC</h1>
            </header>
            <OptionsBar />
            <div className="flex min-h-0 flex-1">
                <ToolStrip />
                <DocumentArea />
                <HistoryPanel />
                <aside className="flex w-[245px] shrink-0 flex-col bg-[#535353]">
                    <PanelTop />
                    <CharacterPanel />
                    <AdjustmentsPanel />
                    <LayersPanel />
                </aside>
            </div>
        </div>
    );
}
